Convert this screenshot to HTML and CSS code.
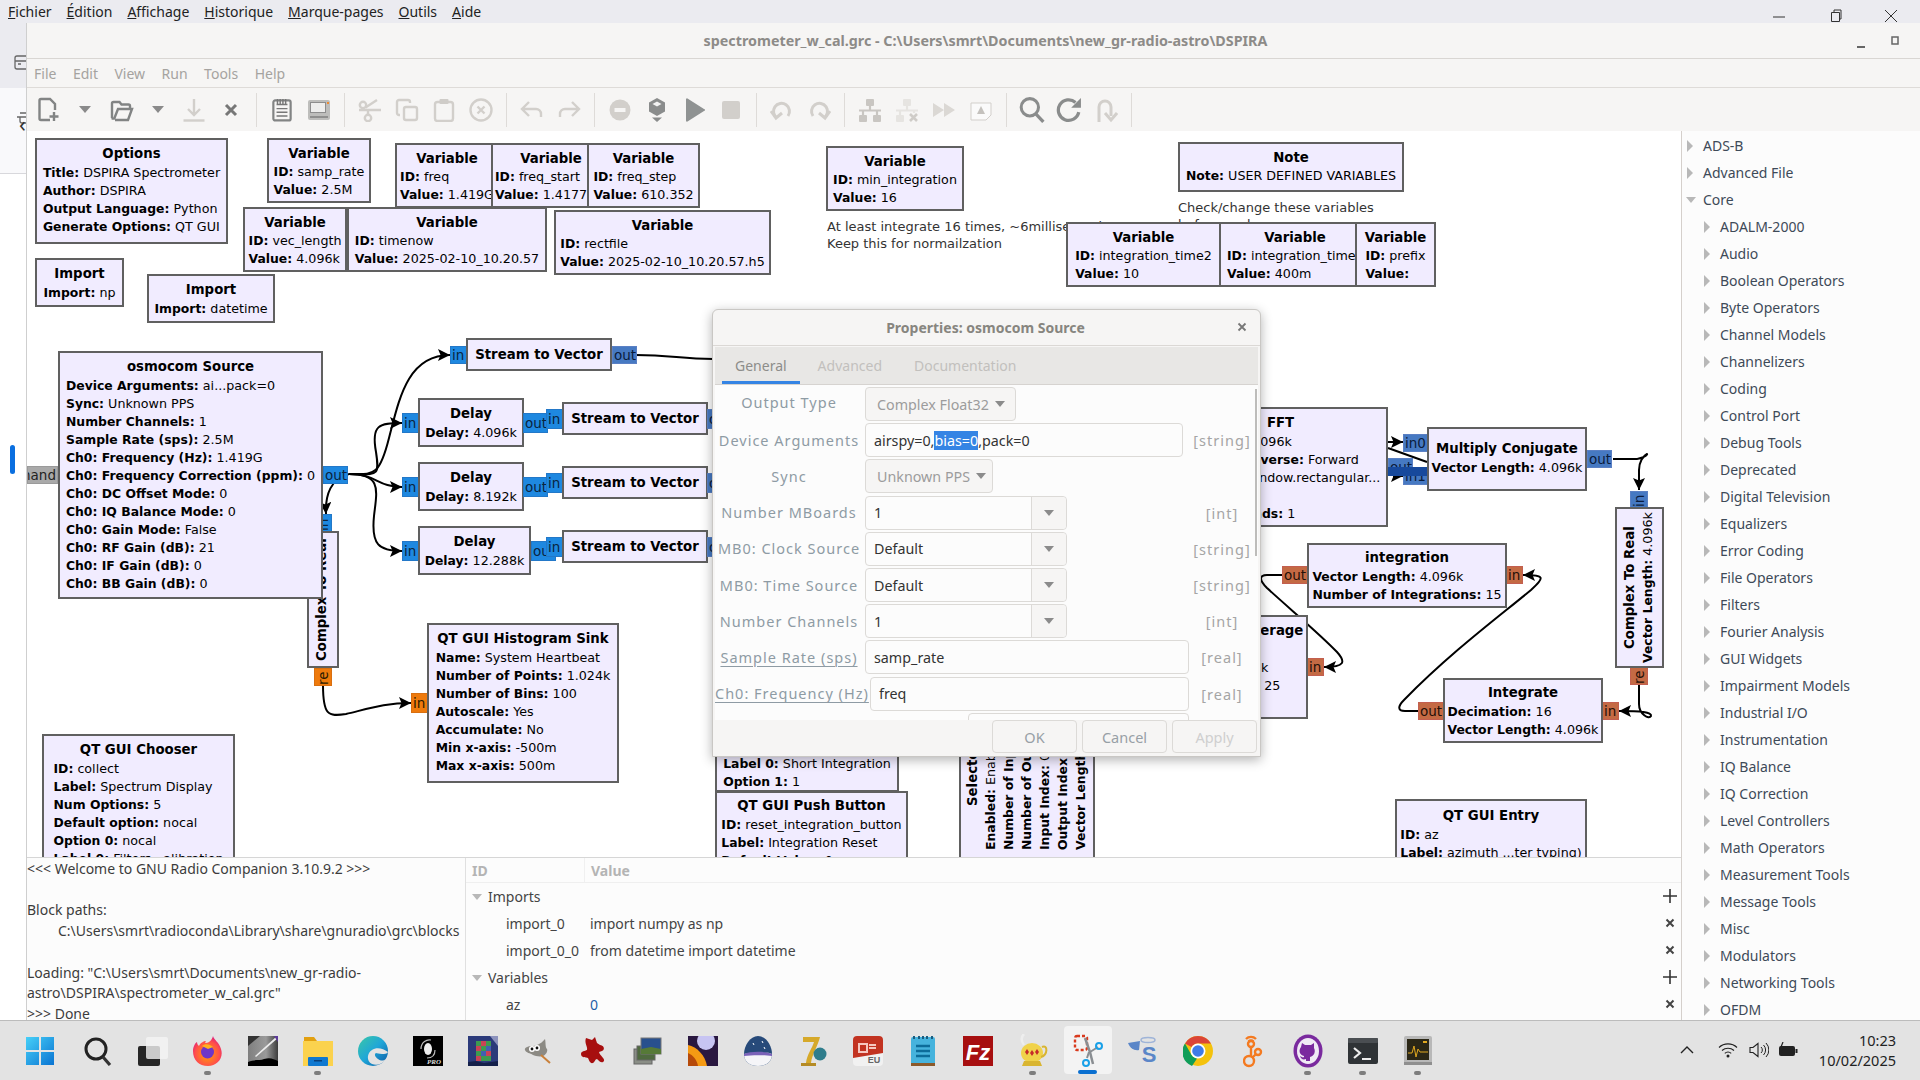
FILE: index.html
```html
<!DOCTYPE html>
<html lang="fr">
<head>
<meta charset="utf-8">
<title>GNU Radio Companion</title>
<link rel="stylesheet" href="styles.css">
</head>
<body>
<div class="screen">
  <header class="browserbar">
    <nav class="bmenu">
      <span><u>F</u>ichier</span><span><u>É</u>dition</span><span><u>A</u>ffichage</span><span><u>H</u>istorique</span><span><u>M</u>arque-pages</span><span><u>O</u>utils</span><span><u>A</u>ide</span>
    </nav>
    <div class="bctrls">
      <svg width="14" height="14" viewBox="0 0 14 14"><path d="M1 8h12" stroke="#333" fill="none"/></svg>
      <svg width="14" height="14" viewBox="0 0 14 14"><path d="M3.500 3.500h8v9h-8zM6 3.500V1h7v9h-1.500" stroke="#333" fill="none"/></svg>
      <svg width="14" height="14" viewBox="0 0 14 14"><path d="M1 1l12 12M13 1L1 13" stroke="#333" fill="none"/></svg>
    </div>
  </header>
  <div class="mainrow">
    <aside class="gutter">
      <div class="g1"><svg width="12" height="20" viewBox="0 0 12 20"><path d="M12 4H3a2 2 0 0 0-2 2v9a2 2 0 0 0 2 2h9M1 9h11M4 12h3" stroke="#666" stroke-width="1.300" fill="none"/></svg></div>
      <div class="g2"><span class="lt">‹</span><svg width="12" height="20" viewBox="0 0 12 20"><path d="M12 5H6M3 9h9M6 9v4a2 2 0 0 0 2 2h4" stroke="#666" stroke-width="1.300" fill="none"/></svg></div>
      <div class="g3"><i class="pill"></i></div>
    </aside>
    <section class="window">
      <div class="titlebar">
        <span class="wtitle">spectrometer_w_cal.grc - C:\Users\smrt\Documents\new_gr-radio-astro\DSPIRA</span>
        <svg class="wmin" width="10" height="10" viewBox="0 0 10 10"><path d="M1 8h8" stroke="#666" stroke-width="2"/></svg>
        <svg class="wmax" width="10" height="10" viewBox="0 0 10 10"><rect x="2" y="1" width="6" height="7" stroke="#666" stroke-width="1.500" fill="none"/></svg>
      </div>
      <nav class="menubar"><span>File</span><span>Edit</span><span>View</span><span>Run</span><span>Tools</span><span>Help</span></nav>
      <div class="toolbar">
        <span class="tbtn"><svg viewBox="0 0 24 26" width="24" height="26"><path d="M13 23H4a1.500 1.500 0 0 1-1.500-1.500v-18A1.500 1.500 0 0 1 4 2h9l5 5v6" class="on"/><path d="M17 15v9M12.500 19.500h9" class="on"/></svg></span>
        <span class="tbtn narrow"><svg viewBox="0 0 12 8" width="12" height="8"><path d="M0 0h12L6 7z" fill="#8a8a8a"/></svg></span>
        <span class="tbtn"><svg viewBox="0 0 24 24" width="24" height="24"><path d="M2 20V5.500A1.500 1.500 0 0 1 3.500 4h6l2 2.500h7A1.500 1.500 0 0 1 20 8v2M5 22h13l4-11H8L4.500 20A1.500 1.500 0 0 1 2 20" class="on"/></svg></span>
        <span class="tbtn narrow"><svg viewBox="0 0 12 8" width="12" height="8"><path d="M0 0h12L6 7z" fill="#8a8a8a"/></svg></span>
        <span class="tbtn"><svg viewBox="0 0 24 24" width="24" height="24"><path d="M12 1v15M6 11l6 6 6-6" class="off"/><path d="M1.500 22.500h21" class="off"/></svg></span>
        <span class="tbtn"><svg viewBox="0 0 14 14" width="14" height="14"><path d="M2 2l10 10M12 2L2 12" stroke="#777" stroke-width="3" fill="none"/></svg></span>
        <i class="tsep"></i>
        <span class="tbtn"><svg viewBox="0 0 22 26" width="20" height="26"><rect x="1.500" y="2.500" width="19" height="22" rx="2" class="on"/><path d="M5 7h12M5 11.500h12M5 15.500h12M5 19.500h12M6 1v5M9 1v5M12 1v5M15 1v5" stroke="#777" stroke-width="1.600" fill="none"/></svg></span>
        <span class="tbtn"><svg viewBox="0 0 24 24" width="24" height="24"><rect x="1" y="2" width="22" height="20" rx="2" fill="#bdbdbb"/><rect x="3.500" y="4.500" width="15" height="10" fill="#ededec" stroke="#8d8d8d"/><rect x="20" y="4" width="2" height="2" fill="#ee8a30"/><rect x="3" y="18" width="18" height="2" fill="#8f8f8e"/></svg></span>
        <i class="tsep"></i>
        <span class="tbtn"><svg viewBox="0 0 24 24" width="24" height="24"><circle cx="5" cy="7" r="3.200" class="off"/><circle cx="10" cy="20" r="3.200" class="off"/><path d="M1 12h22M10 17L10 12M7.500 9.500L19 2" class="off"/></svg></span>
        <span class="tbtn"><svg viewBox="0 0 24 24" width="24" height="24"><path d="M5 17H4a2 2 0 0 1-2-2V4a2 2 0 0 1 2-2h9a2 2 0 0 1 2 2v1" class="off"/><rect x="9" y="9" width="13" height="13" rx="2" class="off"/></svg></span>
        <span class="tbtn"><svg viewBox="0 0 24 24" width="24" height="24"><rect x="3" y="4" width="18" height="19" rx="2.500" class="off"/><rect x="7.500" y="1" width="9" height="5" rx="1" fill="#cfccc8"/></svg></span>
        <span class="tbtn"><svg viewBox="0 0 24 24" width="24" height="24"><circle cx="12" cy="12" r="10.500" class="off"/><path d="M8.500 8.500l7 7M15.500 8.500l-7 7" class="off"/></svg></span>
        <i class="tsep"></i>
        <span class="tbtn"><svg viewBox="0 0 24 24" width="24" height="24"><path d="M9 4L2 11l7 7M2 11h14a5 5 0 0 1 5 5v3" class="off"/></svg></span>
        <span class="tbtn"><svg viewBox="0 0 24 24" width="24" height="24"><path d="M15 4l7 7-7 7M22 11H8a5 5 0 0 0-5 5v3" class="off"/></svg></span>
        <i class="tsep"></i>
        <span class="tbtn"><svg viewBox="0 0 24 24" width="24" height="24"><circle cx="12" cy="12" r="10.500" fill="#d2cfcb"/><rect x="6.500" y="10" width="11" height="4" fill="#f6f5f4"/></svg></span>
        <span class="tbtn"><svg viewBox="0 0 24 24" width="24" height="24"><path d="M12 0l8 4.500v9L12 18l-8-4.500v-9z" fill="#8a8c8c"/><path d="M12 3.500l4.500 2.500L12 8.500 7.500 6z" fill="#f2f2f2"/><path d="M7 19.500h10l-5 4.500z" fill="#8a8c8c"/></svg></span>
        <span class="tbtn"><svg viewBox="0 0 24 24" width="24" height="24"><path d="M4 1.500a1 1 0 0 1 1.500-1L22 11a1 1 0 0 1 0 2L5.500 23.500a1 1 0 0 1-1.500-1z" fill="#8f9292"/></svg></span>
        <span class="tbtn"><svg viewBox="0 0 24 24" width="24" height="24"><rect x="3" y="3" width="18" height="18" rx="2" fill="#d2cfcb"/></svg></span>
        <i class="tsep"></i>
        <span class="tbtn"><svg viewBox="0 0 24 24" width="24" height="24"><path d="M7 20a8 8 0 1 1 11-2" class="off w3"/><path d="M1 13l5 7 6-5" class="off w3"/></svg></span>
        <span class="tbtn"><svg viewBox="0 0 24 24" width="24" height="24"><path d="M17 20a8 8 0 1 0-11-2" class="off w3"/><path d="M23 13l-5 7-6-5" class="off w3"/></svg></span>
        <i class="tsep"></i>
        <span class="tbtn"><svg viewBox="0 0 24 24" width="24" height="24"><rect x="8" y="1" width="8" height="7" rx="1" fill="#c9c6c2"/><rect x="1" y="17" width="8" height="7" rx="1" fill="#c9c6c2"/><rect x="15" y="17" width="8" height="7" rx="1" fill="#c9c6c2"/><path d="M12 8v5M1 12.500h22M5 12v5M19 12v5" stroke="#c9c6c2" stroke-width="2.200" fill="none"/></svg></span>
        <span class="tbtn"><svg viewBox="0 0 24 24" width="24" height="24"><rect x="8" y="1" width="8" height="7" rx="1" fill="#e6e4e1"/><rect x="1" y="17" width="8" height="7" rx="1" fill="#e6e4e1"/><path d="M12 8v5M1 12.500h22M5 12v5M19 12v3" stroke="#e6e4e1" stroke-width="2.200" fill="none"/><path d="M15 16l7 7M22 16l-7 7" stroke="#cfccc8" stroke-width="2.600"/></svg></span>
        <span class="tbtn"><svg viewBox="0 0 24 24" width="24" height="24"><path d="M1 5l11 7-11 7zM12 5l11 7-11 7z" fill="#dbd8d4"/></svg></span>
        <span class="tbtn"><svg viewBox="0 0 24 24" width="24" height="24"><path d="M2 5h20v12l-5 5H2z" fill="#fafafa" stroke="#d2cfcb"/><path d="M12 8l4 8H8z" fill="#c4c1bd"/></svg></span>
        <i class="tsep"></i>
        <span class="tbtn"><svg viewBox="0 0 24 24" width="26" height="26"><circle cx="10" cy="9.500" r="8" stroke="#8a8c8c" stroke-width="2.800" fill="none"/><path d="M15.500 15.500l7 7.500" stroke="#8a8c8c" stroke-width="3" fill="none"/></svg></span>
        <span class="tbtn"><svg viewBox="0 0 24 24" width="26" height="26"><path d="M21 14a9.500 9.500 0 1 1-3-9" stroke="#8a8c8c" stroke-width="3" fill="none"/><path d="M23 1v9h-9z" fill="#8a8c8c"/></svg></span>
        <span class="tbtn"><svg viewBox="0 0 24 24" width="24" height="26"><path d="M5 24V9a6 6 0 0 1 12 0v9" class="off w3"/><path d="M11 15l6 7 6-7" class="off w3"/></svg></span>
        <i class="tsep"></i>
      </div>
      <div class="workrow">
        <div class="centercol">
          <main class="canvas">
            <svg class="wires" viewBox="26 131 1655 726" width="1655" height="726">
              <defs><marker id="ah" markerUnits="userSpaceOnUse" markerWidth="13" markerHeight="12" refX="12" refY="6" orient="auto"><path d="M0 0L12 6 0 12 2.500 6z" fill="#000"/></marker></defs>
              <path class="w" marker-end="url(#ah)" d="M348 474C372 474 378 478 388 438C398 400 406 355 449 355"/>
              <path class="w" marker-end="url(#ah)" d="M348 474C376 474 379 478 375 452C370 425 378 423 401 423"/>
              <path class="w" marker-end="url(#ah)" d="M348 474C376 474 376 487 401 487"/>
              <path class="w" marker-end="url(#ah)" d="M348 474C381 474 376 490 373 516C370 545 378 551 401 551"/>
              <path class="w" marker-end="url(#ah)" d="M348 474C330 478 324 495 325 514"/>
              <path class="w" d="M635 355C670 355 680 359 712 359"/>
              <path class="w" marker-end="url(#ah)" d="M322 685C322 715 327 717 345 714C370 708 385 703 410 703"/>
              <path class="w" marker-end="url(#ah)" d="M1387 442L1402 442"/>
              <path class="w" d="M1387 448L1426 462"/>
              <path class="w" marker-end="url(#ah)" d="M1392 476L1402 476"/>
              <path class="w" marker-end="url(#ah)" d="M1612 459L1636 459C1642 459 1647 454 1646 454C1642 456 1638 462 1638 470L1638 490"/>
              <path class="w" marker-end="url(#ah)" d="M1638 684L1638 704C1638 714 1648 720 1650 716C1651 712 1640 711 1618 711"/>
              <path class="w" marker-end="url(#ah)" d="M1417 711L1404 711C1396 711 1397 706 1403 700C1450 652 1500 615 1530 590C1544 577 1544 575 1522 575"/>
              <path class="w" marker-end="url(#ah)" d="M1281 575L1266 575C1258 575 1258 580 1266 588C1290 610 1320 635 1336 652C1345 662 1344 667 1323 667"/>
            </svg>

            <div class="blk b-options"><b class="t">Options</b><div class="ps"><p><b>Title:</b> DSPIRA Spectrometer</p><p><b>Author:</b> DSPIRA</p><p><b>Output Language:</b> Python</p><p><b>Generate Options:</b> QT GUI</p></div></div>
            <div class="blk tight b-samp"><b class="t">Variable</b><div class="ps"><p><b>ID:</b> samp_rate</p><p><b>Value:</b> 2.5M</p></div></div>
            <div class="blk tight b-freq"><b class="t">Variable</b><div class="ps"><p><b>ID:</b> freq</p><p><b>Value:</b> 1.419G</p></div></div>
            <div class="blk tight b-fstart"><b class="t">Variable</b><div class="ps"><p><b>ID:</b> freq_start</p><p><b>Value:</b> 1.4177G</p></div></div>
            <div class="blk tight b-fstep"><b class="t">Variable</b><div class="ps"><p><b>ID:</b> freq_step</p><p><b>Value:</b> 610.352</p></div></div>
            <div class="blk tight b-vec"><b class="t">Variable</b><div class="ps"><p><b>ID:</b> vec_length</p><p><b>Value:</b> 4.096k</p></div></div>
            <div class="blk tight b-time"><b class="t">Variable</b><div class="ps"><p><b>ID:</b> timenow</p><p><b>Value:</b> 2025-02-10_10.20.57</p></div></div>
            <div class="blk tight b-rect"><b class="t">Variable</b><div class="ps"><p><b>ID:</b> rectfile</p><p><b>Value:</b> 2025-02-10_10.20.57.h5</p></div></div>
            <div class="blk b-impnp"><b class="t">Import</b><div class="ps"><p><b>Import:</b> np</p></div></div>
            <div class="blk b-impdt"><b class="t">Import</b><div class="ps"><p><b>Import:</b> datetime</p></div></div>
            <div class="blk tight b-minint"><b class="t">Variable</b><div class="ps"><p><b>ID:</b> min_integration</p><p><b>Value:</b> 16</p></div></div>
            <div class="cmt c-min">At least integrate 16 times, ~6milliseconds<br>Keep this for normailzation</div>
            <div class="blk tight b-note"><b class="t">Note</b><div class="ps"><p><b>Note:</b> USER DEFINED VARIABLES</p></div></div>
            <div class="cmt c-note">Check/change these variables<br>before each run</div>
            <div class="blk tight b-it2"><b class="t">Variable</b><div class="ps"><p><b>ID:</b> integration_time2</p><p><b>Value:</b> 10</p></div></div>
            <div class="blk tight b-it"><b class="t">Variable</b><div class="ps"><p><b>ID:</b> integration_time</p><p><b>Value:</b> 400m</p></div></div>
            <div class="blk tight b-prefix"><b class="t">Variable</b><div class="ps"><p><b>ID:</b> prefix</p><p><b>Value:</b></p></div></div>

            <span class="port gray p-hand">hand</span>
            <span class="port bright vert p-cin">in</span>
            <span class="port org vert p-cre">re</span>
            <div class="blk rot b-c2r"><b class="t">Complex To Real</b></div>
            <div class="blk b-osmo"><b class="t">osmocom Source</b><div class="ps"><p><b>Device Arguments:</b> ai...pack=0</p><p><b>Sync:</b> Unknown PPS</p><p><b>Number Channels:</b> 1</p><p><b>Sample Rate (sps):</b> 2.5M</p><p><b>Ch0: Frequency (Hz):</b> 1.419G</p><p><b>Ch0: Frequency Correction (ppm):</b> 0</p><p><b>Ch0: DC Offset Mode:</b> 0</p><p><b>Ch0: IQ Balance Mode:</b> 0</p><p><b>Ch0: Gain Mode:</b> False</p><p><b>Ch0: RF Gain (dB):</b> 21</p><p><b>Ch0: IF Gain (dB):</b> 0</p><p><b>Ch0: BB Gain (dB):</b> 0</p></div></div>
            <span class="port bright p-oout">out</span>

            <span class="port bright p-s1i">in</span>
            <div class="blk b-s1"><b class="t">Stream to Vector</b></div>
            <span class="port dim p-s1o">out</span>
            <span class="port bright tall p-d1i">in</span>
            <div class="blk b-d1"><b class="t">Delay</b><div class="ps"><p><b>Delay:</b> 4.096k</p></div></div>
            <span class="port bright tall p-d1o">out</span>
            <span class="port bright tall p-s2i">in</span>
            <div class="blk b-s2"><b class="t">Stream to Vector</b></div>
            <span class="port dim tall p-s2o">out</span>
            <span class="port bright tall p-d2i">in</span>
            <div class="blk b-d2"><b class="t">Delay</b><div class="ps"><p><b>Delay:</b> 8.192k</p></div></div>
            <span class="port bright tall p-d2o">out</span>
            <span class="port bright tall p-s3i">in</span>
            <div class="blk b-s3"><b class="t">Stream to Vector</b></div>
            <span class="port dim tall p-s3o">out</span>
            <span class="port bright tall p-d3i">in</span>
            <div class="blk b-d3"><b class="t">Delay</b><div class="ps"><p><b>Delay:</b> 12.288k</p></div></div>
            <span class="port bright tall p-d3o">out</span>
            <span class="port bright tall p-s4i">in</span>
            <div class="blk b-s4"><b class="t">Stream to Vector</b></div>
            <span class="port dim tall p-s4o">out</span>

            <span class="port org tall p-hi">in</span>
            <div class="blk b-hist"><b class="t">QT GUI Histogram Sink</b><div class="ps"><p><b>Name:</b> System Heartbeat</p><p><b>Number of Points:</b> 1.024k</p><p><b>Number of Bins:</b> 100</p><p><b>Autoscale:</b> Yes</p><p><b>Accumulate:</b> No</p><p><b>Min x-axis:</b> -500m</p><p><b>Max x-axis:</b> 500m</p></div></div>
            <div class="blk b-choose"><b class="t">QT GUI Chooser</b><div class="ps"><p><b>ID:</b> collect</p><p><b>Label:</b> Spectrum Display</p><p><b>Num Options:</b> 5</p><p><b>Default option:</b> nocal</p><p><b>Option 0:</b> nocal</p><p><b>Label 0:</b> Filters...alibration</p></div></div>
            <div class="blk b-choose2"><div class="ps"><p><b>Label 0:</b> Short Integration</p><p><b>Option 1:</b> 1</p></div></div>
            <div class="blk b-push"><b class="t">QT GUI Push Button</b><div class="ps"><p><b>ID:</b> reset_integration_button</p><p><b>Label:</b> Integration Reset</p><p><b>Default Value:</b> 0</p></div></div>
            <div class="blk rot b-sel"><b class="t">Selector</b><div class="ps"><p><b>Enabled:</b> Enabled</p><p><b>Number of Inputs:</b> 1</p><p><b>Number of Outputs:</b> 2</p><p><b>Input Index:</b> 0</p><p><b>Output Index:</b> 0</p><p><b>Vector Length:</b> 4.096k</p></div></div>

            <div class="blk b-fft"><b class="t">FFT</b><div class="ps"><p><b>FFT Size:</b> 4.096k</p><p><b>Forward/Reverse:</b> Forward</p><p><b>Window:</b> window.rectangular...</p><p>&nbsp;</p><p><b>Num. Threads:</b> 1</p></div></div>
            <span class="port dim p-m0">in0</span>
            <span class="port dim p-m1">in1</span>
            <span class="port dim p-fo">out</span>
            <i class="overlap"></i>
            <div class="blk b-mul"><b class="t">Multiply Conjugate</b><div class="ps"><p><b>Vector Length:</b> 4.096k</p></div></div>
            <span class="port dim p-mo">out</span>
            <span class="port dim vert p-c2i">in</span>
            <span class="port brn vert p-c2e">re</span>
            <div class="blk rot b-c2"><b class="t">Complex To Real</b><div class="ps"><p><b>Vector Length:</b> 4.096k</p></div></div>
            <span class="port brn p-io">out</span>
            <span class="port brn p-ii">in</span>
            <div class="blk b-integ"><b class="t">integration</b><div class="ps"><p><b>Vector Length:</b> 4.096k</p><p><b>Number of Integrations:</b> 15</p></div></div>
            <span class="port brn p-gi">in</span>
            <span class="port brn p-go">out</span>
            <div class="blk b-grate"><b class="t">Integrate</b><div class="ps"><p><b>Decimation:</b> 16</p><p><b>Vector Length:</b> 4.096k</p></div></div>
            <span class="port brn p-ai">in</span>
            <div class="blk b-avg"><b class="t">Moving Average</b><div class="ps"><p><b>Length:</b> 1k</p><p><b>Size:</b> 4.096k</p><p><b>Iterations:</b> 25</p></div></div>
            <div class="blk b-entry"><b class="t">QT GUI Entry</b><div class="ps"><p><b>ID:</b> az</p><p><b>Label:</b> azimuth ...ter typing)</p></div></div>
          </main>
          <div class="bottom">
            <pre class="console">&lt;&lt;&lt; Welcome to GNU Radio Companion 3.10.9.2 &gt;&gt;&gt;

Block paths:
	C:\Users\smrt\radioconda\Library\share\gnuradio\grc\blocks

Loading: "C:\Users\smrt\Documents\new_gr-radio-
astro\DSPIRA\spectrometer_w_cal.grc"
&gt;&gt;&gt; Done</pre>
            <div class="vars">
              <div class="vhead"><span class="vh1">ID</span><span class="vh2">Value</span></div>
              <div class="vrow"><i class="tri-d"></i><span>Imports</span></div>
              <div class="vrow sub"><span class="vk">import_0</span><span>import numpy as np</span></div>
              <div class="vrow sub"><span class="vk">import_0_0</span><span>from datetime import datetime</span></div>
              <div class="vrow"><i class="tri-d"></i><span>Variables</span></div>
              <div class="vrow sub"><span class="vk">az</span><span class="vblue">0</span></div>
              <div class="vbtns">
                <svg width="16" height="16" viewBox="0 0 16 16"><path d="M8 1v14M1 8h14" stroke="#333" stroke-width="1.600"/></svg>
                <svg width="16" height="16" viewBox="0 0 16 16"><path d="M4.500 4.500l7 7M11.500 4.500l-7 7" stroke="#444" stroke-width="2"/></svg>
                <svg width="16" height="16" viewBox="0 0 16 16"><path d="M4.500 4.500l7 7M11.500 4.500l-7 7" stroke="#444" stroke-width="2"/></svg>
                <svg width="16" height="16" viewBox="0 0 16 16"><path d="M8 1v14M1 8h14" stroke="#333" stroke-width="1.600"/></svg>
                <svg width="16" height="16" viewBox="0 0 16 16"><path d="M4.500 4.500l7 7M11.500 4.500l-7 7" stroke="#444" stroke-width="2"/></svg>
              </div>
            </div>
          </div>
        </div>
        <aside class="sidebar">
          <div class="ti"><i class="tri-r"></i>ADS-B</div>
          <div class="ti"><i class="tri-r"></i>Advanced File</div>
          <div class="ti"><i class="tri-d"></i>Core</div>
          <div class="ti c"><i class="tri-r"></i>ADALM-2000</div>
          <div class="ti c"><i class="tri-r"></i>Audio</div>
          <div class="ti c"><i class="tri-r"></i>Boolean Operators</div>
          <div class="ti c"><i class="tri-r"></i>Byte Operators</div>
          <div class="ti c"><i class="tri-r"></i>Channel Models</div>
          <div class="ti c"><i class="tri-r"></i>Channelizers</div>
          <div class="ti c"><i class="tri-r"></i>Coding</div>
          <div class="ti c"><i class="tri-r"></i>Control Port</div>
          <div class="ti c"><i class="tri-r"></i>Debug Tools</div>
          <div class="ti c"><i class="tri-r"></i>Deprecated</div>
          <div class="ti c"><i class="tri-r"></i>Digital Television</div>
          <div class="ti c"><i class="tri-r"></i>Equalizers</div>
          <div class="ti c"><i class="tri-r"></i>Error Coding</div>
          <div class="ti c"><i class="tri-r"></i>File Operators</div>
          <div class="ti c"><i class="tri-r"></i>Filters</div>
          <div class="ti c"><i class="tri-r"></i>Fourier Analysis</div>
          <div class="ti c"><i class="tri-r"></i>GUI Widgets</div>
          <div class="ti c"><i class="tri-r"></i>Impairment Models</div>
          <div class="ti c"><i class="tri-r"></i>Industrial I/O</div>
          <div class="ti c"><i class="tri-r"></i>Instrumentation</div>
          <div class="ti c"><i class="tri-r"></i>IQ Balance</div>
          <div class="ti c"><i class="tri-r"></i>IQ Correction</div>
          <div class="ti c"><i class="tri-r"></i>Level Controllers</div>
          <div class="ti c"><i class="tri-r"></i>Math Operators</div>
          <div class="ti c"><i class="tri-r"></i>Measurement Tools</div>
          <div class="ti c"><i class="tri-r"></i>Message Tools</div>
          <div class="ti c"><i class="tri-r"></i>Misc</div>
          <div class="ti c"><i class="tri-r"></i>Modulators</div>
          <div class="ti c"><i class="tri-r"></i>Networking Tools</div>
          <div class="ti c"><i class="tri-r"></i>OFDM</div>
        </aside>
      </div>
    </section>
  </div>

  <footer class="taskbar">
    <div class="tbicons">
      <span class="tb first"><svg width="30" height="30" viewBox="0 0 30 30"><defs><linearGradient id="win" x1="0" y1="0" x2="1" y2="1"><stop offset="0" stop-color="#47d0f8"/><stop offset="1" stop-color="#0a74d2"/></linearGradient></defs><path d="M1 1h13v13H1zM16 1h13v13H16zM1 16h13v13H1zM16 16h13v13H16z" fill="url(#win)"/></svg></span>
      <span class="tb"><svg width="30" height="30" viewBox="0 0 30 30"><circle cx="13" cy="13" r="10" fill="none" stroke="#222" stroke-width="3"/><path d="M20 21l7 8" stroke="#333" stroke-width="3.200"/></svg></span>
      <span class="tb"><svg width="30" height="30" viewBox="0 0 30 30"><rect x="0" y="10" width="22" height="20" rx="2" fill="#262626"/><rect x="8" y="1" width="22" height="22" rx="2" fill="#f4f4f4" opacity=".8"/></svg></span>
      <span class="tb dot"><svg width="30" height="30" viewBox="0 0 30 30"><defs><radialGradient id="ff" cx=".5" cy=".6" r=".6"><stop offset="0" stop-color="#ffa400"/><stop offset=".7" stop-color="#ff4f4a"/><stop offset="1" stop-color="#e01f7c"/></radialGradient></defs><path d="M20 0c1 4 6 6 8 13 3 9-4 17-13 17S0 24 0 15c0-4 2-8 4-9 0 2 1 3 2 4 1-3 5-5 7-5-1 1-1 2 0 2 3 0 6-3 7-7z" fill="url(#ff)"/><circle cx="14.500" cy="16" r="6.500" fill="#6d35c9"/><path d="M9 10c3-3 8-2 11 1l-5 2z" fill="#ffb020"/></svg></span>
      <span class="tb"><svg width="30" height="30" viewBox="0 0 30 30"><defs><linearGradient id="cm" x1="0" y1="0" x2="1" y2="0"><stop offset="0" stop-color="#7f7f7f"/><stop offset=".6" stop-color="#9a9a9a"/><stop offset="1" stop-color="#3c3c3c"/></linearGradient></defs><rect width="30" height="30" fill="url(#cm)"/><path d="M0 0h12L0 10z" fill="#333"/><path d="M7 20L28 1l2 1-22 19z" fill="#ececec"/><path d="M0 30v-4c6-3 12-1 16-3 6-2 10 0 14 2v5z" fill="#000"/><path d="M26 0h4v6z" fill="#5d3a9b"/></svg></span>
      <span class="tb dot"><svg width="30" height="30" viewBox="0 0 30 30"><path d="M1 1h10l3 4h15v5H1z" fill="#e2a010"/><path d="M0 5h30v25H0z" fill="#fbd24e"/><rect x="5" y="21" width="20" height="9" rx="1" fill="#0f78d0"/><rect x="11" y="24" width="8" height="1.500" fill="#083f7a"/></svg></span>
      <span class="tb"><svg width="30" height="30" viewBox="0 0 30 30"><defs><linearGradient id="edg" x1="0" y1="0" x2="1" y2="1"><stop offset="0" stop-color="#3bc8a6"/><stop offset=".5" stop-color="#1fa6d8"/><stop offset="1" stop-color="#0c59a4"/></linearGradient></defs><circle cx="15" cy="15" r="15" fill="url(#edg)"/><path d="M14 14c4-3 11-2 16 2-1 2-4 2-6 2-3 0-5-1-6-1-2 1-1 4 2 6 3 2 5 2 8 0-3 5-9 7-14 5-6-3-5-11 0-14z" fill="#e3e3e3"/></svg></span>
      <span class="tb"><svg width="30" height="30" viewBox="0 0 30 30"><rect width="30" height="30" fill="#000"/><ellipse cx="15" cy="13" rx="4" ry="6" fill="#eee"/><path d="M8 13c0-7 6-10 10-9M22 14c0 5-3 8-8 8" stroke="#bbb" stroke-width="1.200" fill="none"/><text x="14" y="28" class="svgpro">PRO</text></svg></span>
      <span class="tb"><svg width="30" height="30" viewBox="0 0 30 30"><rect width="30" height="30" fill="#2b3a7a"/><path d="M22 0h8v10z" fill="#8d93bd"/><rect x="8" y="5" width="5" height="5" fill="#3d9a4f"/><rect x="13" y="5" width="5" height="5" fill="#c84356"/><rect x="18" y="5" width="5" height="5" fill="#3d9a4f"/><rect x="8" y="10" width="5" height="5" fill="#c84356"/><rect x="13" y="10" width="5" height="5" fill="#3d9a4f"/><rect x="18" y="10" width="5" height="5" fill="#4160b0"/><rect x="8" y="15" width="5" height="5" fill="#3d9a4f"/><rect x="13" y="15" width="5" height="5" fill="#4160b0"/><rect x="18" y="15" width="5" height="5" fill="#c84356"/><rect x="8" y="20" width="5" height="5" fill="#c84356"/><rect x="13" y="20" width="5" height="5" fill="#3d9a4f"/><rect x="18" y="20" width="5" height="5" fill="#3d9a4f"/><path d="M0 30v-4l8-1 8 2 14-2v5z" fill="#14204a"/></svg></span>
      <span class="tb"><svg width="30" height="30" viewBox="0 0 30 30"><path d="M22 3c1 4 0 8 2 10 1 2-1 6-4 7-3 1-8 0-10-1-3-2-7-2-8-5-1-2 3-4 7-4 3 0 8-1 13-7z" fill="#8c8a84"/><circle cx="9" cy="13" r="3" fill="#fff"/><circle cx="14" cy="12" r="3" fill="#fff"/><circle cx="9" cy="13" r="1.400" fill="#111"/><circle cx="14" cy="12" r="1.400" fill="#111"/><path d="M18 19l9 8" stroke="#c9803a" stroke-width="2"/></svg></span>
      <span class="tb"><svg width="30" height="30" viewBox="0 0 30 30"><path d="M8 2l6 2 3-3 2 6 3 2c3 0 6 4 2 6l-3 1c1 4 6 6 5 9-2 3-5 0-7-2-2 0-2 3-4 4-3 1-4-3-5-5-2-1-7 0-7-4 0-3 4-3 6-4 1-3-3-7-1-12z" fill="#a70f0f"/></svg></span>
      <span class="tb"><svg width="30" height="30" viewBox="0 0 30 30"><rect x="1" y="13" width="18" height="15" fill="#8a8e86" stroke="#666"/><rect x="4" y="10" width="18" height="14" fill="#4f6a3f" stroke="#666"/><rect x="8" y="2" width="20" height="16" fill="#28508e" stroke="#777"/><path d="M8 13l10-2 10 2v5H8z" fill="#567a37"/></svg></span>
      <span class="tb"><svg width="30" height="30" viewBox="0 0 30 30"><rect width="30" height="30" fill="#2a1840"/><circle cx="18" cy="5" r="9" fill="#c7c4f2"/><path d="M0 9c9 2 17 10 19 21H0z" fill="#f59a14"/><path d="M0 17c5 2 9 7 10 13H0z" fill="#b64a0a"/></svg></span>
      <span class="tb"><svg width="30" height="32" viewBox="0 0 30 32"><path d="M15 1C23 1 29 11 29 19c0 8-6 12-14 12S1 27 1 19C1 11 7 1 15 1z" fill="#274a7a"/><path d="M1 19c3-1 5 0 7-1 3 1 5-1 8 0 4 1 8-2 13 1 0 8-6 12-14 12S1 27 1 19z" fill="#f5f5f8"/><path d="M1 19c6-3 22-3 28 0v2c-8-1-20-1-28 0z" fill="#7a62b8"/><path d="M10 8l1 2M19 6l1 2M21 12l1 2" stroke="#fff"/></svg></span>
      <span class="tb"><svg width="30" height="32" viewBox="0 0 30 32"><path d="M5 2h17c-2 9-8 17-9 26h-5c1-9 6-14 8-21H5z" fill="#d6a92a"/><path d="M3 28h15v3H3z" fill="#b58b25"/><circle cx="22" cy="19" r="6.500" fill="#2f7d8c"/></svg></span>
      <span class="tb"><svg width="30" height="30" viewBox="0 0 30 30"><rect width="30" height="30" rx="4" fill="#f1f1f1"/><path d="M0 4a4 4 0 0 1 4-4h22a4 4 0 0 1 4 4v13L0 22z" fill="#c23321"/><path d="M6 8h8v8H6z" fill="none" stroke="#f6c7bf" stroke-width="2"/><path d="M16 9h7M16 12h7" stroke="#f6c7bf" stroke-width="2"/><text x="21" y="27" class="svgeu">EU</text></svg></span>
      <span class="tb"><svg width="26" height="32" viewBox="0 0 26 32"><rect x="1" y="2" width="24" height="29" rx="2" fill="#46b3dd"/><path d="M1 28h24v3H1z" fill="#8c5a2b"/><path d="M6 11h14M6 16h14M6 21h14" stroke="#0d6c9a" stroke-width="2.500"/><path d="M4 1v3M9 1v3M13 1v3M17 1v3M22 1v3" stroke="#1a5d80" stroke-width="2"/></svg></span>
      <span class="tb"><svg width="30" height="30" viewBox="0 0 30 30"><rect width="30" height="30" fill="#a70f10"/><text x="15" y="24" class="svgfz">Fz</text></svg></span>
      <span class="tb dot"><svg width="30" height="34" viewBox="0 0 30 34"><path d="M6 0C3 3 3 7 6 11" stroke="#eee" stroke-width="2.500" fill="none"/><ellipse cx="14" cy="19" rx="11" ry="10" fill="#f0d24a"/><path d="M6 27h16l2 5H4z" fill="#d9b531"/><path d="M24 13c6-3 6 8-1 10" stroke="#d9b531" stroke-width="2" fill="none"/><path d="M7 18l2-3 2 3-2 3zM17 18l2-3 2 3-2 3zM12 19l2-3 2 3-2 3z" fill="#c62a2a"/></svg></span>
      <span class="tb active"><svg width="30" height="34" viewBox="0 0 30 34"><rect x="2" y="2" width="12" height="14" rx="2" fill="none" stroke="#d93a1e" stroke-width="2.400" stroke-dasharray="3 2"/><path d="M12 4l5 14 3 12" stroke="#8a8e92" stroke-width="2.500" fill="none"/><path d="M16 18l-2 6M17 18l8-5" stroke="#8a8e92" stroke-width="2"/><circle cx="13" cy="29" r="3" fill="none" stroke="#18a0e8" stroke-width="2"/><circle cx="26" cy="12" r="3" fill="none" stroke="#18a0e8" stroke-width="2"/></svg></span>
      <span class="tb"><svg width="30" height="32" viewBox="0 0 30 32"><path d="M0 8l12-2-1 9c-5 1-9-2-11-7z" fill="#5a86c8"/><ellipse cx="20" cy="5" rx="7" ry="2.500" fill="none" stroke="#9fb4d8" stroke-width="1.500"/><text x="21" y="27" class="svgs">S</text></svg></span>
      <span class="tb"><svg width="30" height="30" viewBox="0 0 30 30"><circle cx="15" cy="15" r="15" fill="#f4c20d"/><path d="M15 0a15 15 0 0 1 13 7.500H15A7.500 7.500 0 0 0 8.500 11L2 7.500A15 15 0 0 1 15 0z" fill="#db4437"/><path d="M2 7.500L8.500 19A7.500 7.500 0 0 0 14 22.500L9 30A15 15 0 0 1 2 7.500z" fill="#0f9d58"/><circle cx="15" cy="15" r="7.500" fill="#fff"/><circle cx="15" cy="15" r="5.800" fill="#3f7be8"/></svg></span>
      <span class="tb"><svg width="20" height="34" viewBox="0 0 20 34"><g fill="none" stroke="#f47a20" stroke-width="2.400"><circle cx="8" cy="10" r="3"/><circle cx="15" cy="18" r="3"/><circle cx="6" cy="27" r="5"/><path d="M8 13v9M13 20l-4 4M3 5a7 7 0 0 1 10 0M5.500 7.500a3.500 3.500 0 0 1 5 0"/></g></svg></span>
      <span class="tb dot"><svg width="30" height="34" viewBox="0 0 30 34"><ellipse cx="15" cy="17" rx="14.500" ry="16.500" fill="#7a2a9e"/><ellipse cx="15" cy="17" rx="11" ry="13" fill="#f0eaf5"/><path d="M9 9l3 2h6l3-2v5c2 4 0 8-4 9v4h-4v-2c-3 1-5 0-6-3 2 1 3 2 4 1v-1c-4-1-6-5-3-9z" fill="#7a2a9e"/></svg></span>
      <span class="tb dot"><svg width="30" height="26" viewBox="0 0 30 26"><rect width="30" height="26" rx="2" fill="#2f3336"/><rect width="30" height="5" rx="1" fill="#4a4e52"/><path d="M6 10l6 5-6 5" fill="none" stroke="#eee" stroke-width="2.200"/><path d="M14 21h9" stroke="#eee" stroke-width="2"/></svg></span>
      <span class="tb dot"><svg width="28" height="30" viewBox="0 0 28 30"><rect width="28" height="28" rx="2" fill="#b8b8b8"/><rect y="26" width="28" height="3" fill="#8f8f8f"/><rect x="3" y="3" width="22" height="21" fill="#2b2716"/><path d="M4 17h4l2-7 2 11 2-8 2 3h8" fill="none" stroke="#e0a820" stroke-width="1"/><rect x="19" y="5" width="4" height="2" fill="#e0a820"/></svg></span>
    </div>
    <div class="tray">
      <svg width="14" height="8" viewBox="0 0 14 8"><path d="M1 7l6-6 6 6" fill="none" stroke="#222" stroke-width="1.400"/></svg>
      <svg class="wifi" width="20" height="16" viewBox="0 0 20 16"><path d="M1 5.500a13 13 0 0 1 18 0M4 8.500a9 9 0 0 1 12 0M6.800 11.300a4.500 4.500 0 0 1 6.400 0" fill="none" stroke="#222" stroke-width="1.100"/><circle cx="10" cy="14" r="1.500" fill="#222"/></svg>
      <svg width="20" height="16" viewBox="0 0 20 16"><path d="M1 5.500h3L9 1.500v13l-5-4H1z" fill="none" stroke="#222" stroke-width="1.100"/><path d="M12 5a4 4 0 0 1 0 6M14.500 3a7 7 0 0 1 0 10M17 1a10 10 0 0 1 0 14" fill="none" stroke="#222"/></svg>
      <svg class="batt" width="20" height="16" viewBox="0 0 20 16"><rect x="1" y="4" width="16" height="10" rx="2" fill="#222"/><rect x="17.500" y="7" width="2" height="4" fill="#222"/><path d="M5 0L3 5h3L4 10" fill="none" stroke="#222" stroke-width="1.200"/></svg>
      <div class="clock"><span>10:23</span><span>10/02/2025</span></div>
    </div>
  </footer>

  <div class="dialog">
    <div class="dtitle"><b>Properties: osmocom Source</b><svg class="dx" width="10" height="10" viewBox="0 0 10 10"><path d="M1.500 1.500l7 7M8.500 1.500l-7 7" stroke="#777" stroke-width="1.800"/></svg></div>
    <div class="dtabs"><span class="tab sel">General</span><span class="tab">Advanced</span><span class="tab">Documentation</span></div>
    <div class="dbody">
      <div class="row"><label>Output Type</label><div class="ctl dd w-ot">Complex Float32<i class="tri-s"></i></div></div>
      <div class="row"><label>Device Arguments</label><div class="ctl en w-en1">airspy=0,<mark>bias=0</mark>,pack=0</div><span class="ty">[string]</span></div>
      <div class="row"><label>Sync</label><div class="ctl dd w-sy">Unknown PPS<i class="tri-s"></i></div></div>
      <div class="row"><label>Number MBoards</label><div class="ctl cb"><span>1</span><em><i class="tri-s"></i></em></div><span class="ty">[int]</span></div>
      <div class="row"><label>MB0: Clock Source</label><div class="ctl cb"><span>Default</span><em><i class="tri-s"></i></em></div><span class="ty">[string]</span></div>
      <div class="row"><label>MB0: Time Source</label><div class="ctl cb"><span>Default</span><em><i class="tri-s"></i></em></div><span class="ty">[string]</span></div>
      <div class="row"><label>Number Channels</label><div class="ctl cb"><span>1</span><em><i class="tri-s"></i></em></div><span class="ty">[int]</span></div>
      <div class="row"><label class="ul">Sample Rate (sps)</label><div class="ctl en w-en2">samp_rate</div><span class="ty">[real]</span></div>
      <div class="row"><label class="ul wide">Ch0: Frequency (Hz)</label><div class="ctl en w-en3">freq</div><span class="ty">[real]</span></div>
      <div class="row"><div class="ctl en w-en4"></div></div>
      <i class="dscroll"></i>
    </div>
    <div class="dact"><span class="dbtn">OK</span><span class="dbtn">Cancel</span><span class="dbtn dis">Apply</span></div>
  </div>
</div>
</body>
</html>
```

FILE: styles.css
```css
*{box-sizing:border-box}
html,body{margin:0;padding:0}
body{width:1920px;height:1080px;overflow:hidden;font-family:"Noto Sans",sans-serif;color:#333}
.screen{position:relative;width:1920px;height:1080px;display:flex;flex-direction:column;overflow:hidden;background:#fff}

/* browser strip */
.browserbar{height:23px;flex:none;background:#ebebf0;display:flex;justify-content:space-between;align-items:flex-start;overflow:hidden}
.bmenu{display:flex;gap:15px;padding:2px 0 0 8px;font-size:14px;line-height:20px;color:#222}
.bctrls{display:flex;gap:42px;padding:9px 22px 0 0}

.mainrow{flex:1;display:flex;min-height:0}
.gutter{width:26px;flex:none;display:flex;flex-direction:column;background:#fff}
.g1{height:65px;background:#ebebf0;padding:29px 0 0 14px;line-height:0}
.g2{height:86px;background:#f9f9fb;border-bottom:1px solid #d8d8dc;padding:20px 0 0 14px;position:relative;line-height:0}
.g2 .lt{position:absolute;left:19px;top:24px;font-size:22px;line-height:22px;color:#333}
.g3{flex:1;position:relative}
.pill{position:absolute;left:10px;top:271px;width:5px;height:29px;border-radius:3px;background:#0a6fe0}

.window{flex:1;min-width:0;display:flex;flex-direction:column;background:#f6f5f4;border-left:1px solid #cfcfcf}
.titlebar{height:36px;flex:none;position:relative;display:flex;justify-content:center;align-items:center;border-bottom:1px solid #d9d6d3;padding-left:24px}
.wtitle{font-weight:700;font-size:14.300px;color:#8d8b88}
.wmin{position:absolute;left:1829px;top:16px}
.wmax{position:absolute;left:1863px;top:13px}
.menubar{height:29px;flex:none;display:flex;gap:16.500px;align-items:center;padding:1px 0 0 7px;font-size:14px;color:#a5a3a0;border-bottom:1px solid #dedbd8}
.toolbar{height:43px;flex:none;display:flex;align-items:center;padding-left:3.500px}
.tbtn{width:37px;height:36px;display:flex;align-items:center;justify-content:center}
.tbtn.narrow{width:35.500px}
.tsep{width:1px;height:34px;background:#dedbd8;margin:0 6.500px}
.on{fill:none;stroke:#828484;stroke-width:2.400}
.off{fill:none;stroke:#d2cfcb;stroke-width:2.400}
.w3{stroke-width:3}

.workrow{flex:1;display:flex;min-height:0}
.centercol{width:1654px;flex:none;display:flex;flex-direction:column;min-width:0}
.canvas{flex:1;position:relative;overflow:hidden;background:#fff;min-height:0}
.wires{position:absolute;left:0;top:0}
.w{fill:none;stroke:#000;stroke-width:2}

/* flowgraph nodes */
.blk{position:absolute;background:#f1ecff;border:2px solid #606060;display:flex;flex-direction:column;align-items:center;padding-top:5px;font-family:"DejaVu Sans",sans-serif;font-size:12.700px;line-height:18px;color:#000;white-space:nowrap}
.blk .t{display:block;margin-bottom:1px;font-size:13.300px}
.tight .t{margin-bottom:0}
.ps{align-self:center}
.ps p{margin:0}
.ps b{font-size:12.400px}
.rot{writing-mode:vertical-rl;transform:rotate(180deg);align-items:center;padding-top:0;padding-left:0;padding-right:4px}
.cmt{position:absolute;font-family:"DejaVu Sans",sans-serif;font-size:13px;line-height:17px;color:#333;white-space:nowrap}
.c-min{left:800px;top:87px}
.c-note{left:1151px;top:68px}
.port{position:absolute;font-family:"DejaVu Sans",sans-serif;font-size:13.500px;line-height:17px;height:18px;padding-left:1px;overflow:hidden;color:#111;border:1px solid transparent;white-space:nowrap}
.tall{height:20px;line-height:19px}
.vert{writing-mode:vertical-rl;transform:rotate(180deg);width:18px;padding:0;line-height:17px;text-align:left}
.bright{background:#1e88e0;border-color:#2378c8;color:#0a2540}
.dim{background:#4679c2;border-color:#5b80c4;color:#0a1c3c}
.org{background:#ee7a0c;border-color:#d96f10;color:#2a1a00}
.brn{background:#c46a44;border-color:#c35f50;color:#241008}
.gray{background:#a9a9a9;border-color:#9a9a9a;color:#222;display:flex;justify-content:flex-end}
.overlap{position:absolute;left:1361px;top:336px;width:40px;height:9px;background:#17499c}

.b-options{left:8px;top:7px;width:193px;height:106px}
.b-samp{left:240px;top:7px;width:104px;height:65px}
.b-freq{left:368px;top:12px;width:104px;height:65px}
.b-fstart{left:464px;top:12px;width:120px;height:65px}
.b-fstart .ps{align-self:flex-start;padding-left:2px}
.b-fstep{left:560px;top:12px;width:113px;height:65px}
.b-vec{left:216px;top:76px;width:104px;height:65px}
.b-time{left:320px;top:76px;width:200px;height:65px}
.b-rect{left:527px;top:79px;width:217px;height:65px}
.b-impnp{left:8px;top:127px;width:89px;height:49px}
.b-impdt{left:120px;top:143px;width:128px;height:49px}
.b-minint{left:799px;top:15px;width:138px;height:65px}
.b-note{left:1151px;top:11px;width:226px;height:50px}
.b-it2{left:1039px;top:91px;width:155px;height:65px}
.b-it{left:1192px;top:91px;width:152px;height:65px}
.b-it .ps{align-self:flex-start;padding-left:6px}
.b-prefix{left:1328px;top:91px;width:81px;height:65px}
.b-osmo{left:31px;top:220px;width:265px;height:248px}
.b-c2r{left:280px;top:400px;width:32px;height:137px}
.b-s1{left:439px;top:207px;width:146px;height:33px;padding-top:6px}
.b-s2{left:535px;top:271px;width:146px;height:33px;padding-top:6px}
.b-s3{left:535px;top:335px;width:146px;height:33px;padding-top:6px}
.b-s4{left:535px;top:399px;width:146px;height:33px;padding-top:6px}
.b-d1{left:391px;top:267px;width:106px;height:49px}
.b-d2{left:391px;top:331px;width:106px;height:49px}
.b-d3{left:391px;top:395px;width:113px;height:49px}
.b-hist{left:400px;top:492px;width:192px;height:160px}
.b-choose{left:15px;top:603px;width:193px;height:160px}
.b-choose2{left:688px;top:480px;width:184px;height:181px;justify-content:flex-end}
.b-choose2 .ps{margin-bottom:-1px}
.b-push{left:688px;top:660px;width:193px;height:100px;padding-top:4px}
.b-sel{left:932px;top:557px;width:136px;height:173px;padding-right:3px}
.b-fft{left:1146px;top:276px;width:215px;height:120px}
.b-mul{left:1400px;top:296px;width:160px;height:64px;padding-top:11px}
.b-c2{left:1588px;top:376px;width:49px;height:161px}
.b-integ{left:1280px;top:412px;width:200px;height:65px;padding-top:4px}
.b-grate{left:1416px;top:547px;width:160px;height:65px;padding-top:4px}
.b-avg{left:1151px;top:484px;width:130px;height:104px}
.b-avg .ps{align-self:flex-start;padding-left:7px}
.b-entry{left:1368px;top:668px;width:192px;height:100px;padding-top:6px}

.p-hand{left:0;top:335px;width:31px;padding:0 1px 0 0}
.p-cin{left:287px;top:383px;height:18px}
.p-cre{left:287px;top:537px;height:18px}
.p-oout{left:296px;top:335px;width:25px}
.p-s1i{left:423px;top:215px;width:17px}
.p-s1o{left:585px;top:215px;width:25px}
.p-d1i{left:375px;top:282px;width:17px}
.p-d1o{left:496px;top:282px;width:25px}
.p-s2i{left:519px;top:278px;width:17px}
.p-s2o{left:680px;top:278px;width:25px}
.p-d2i{left:375px;top:346px;width:17px}
.p-d2o{left:496px;top:346px;width:25px}
.p-s3i{left:519px;top:342px;width:17px}
.p-s3o{left:680px;top:342px;width:25px}
.p-d3i{left:375px;top:410px;width:17px}
.p-d3o{left:504px;top:410px;width:25px}
.p-s4i{left:519px;top:406px;width:17px}
.p-s4o{left:680px;top:406px;width:25px}
.p-hi{left:384px;top:562px;width:17px}
.p-m0{left:1376px;top:303px;width:25px}
.p-m1{left:1376px;top:336px;width:25px}
.p-fo{left:1361px;top:327px;width:25px}
.p-mo{left:1560px;top:319px;width:25px}
.p-c2i{left:1603px;top:360px;height:17px}
.p-c2e{left:1603px;top:536px;height:18px}
.p-io{left:1255px;top:435px;width:26px}
.p-ii{left:1479px;top:435px;width:17px}
.p-gi{left:1575px;top:571px;width:17px}
.p-go{left:1391px;top:571px;width:26px}
.p-ai{left:1280px;top:527px;width:17px}

/* bottom panes */
.bottom{height:163px;flex:none;display:flex;background:#fcfcfc;border-top:1px solid #d6d6d6}
.console{width:439px;flex:none;margin:0;padding:1px 0 0 0;font-family:"Noto Sans",sans-serif;font-size:14px;line-height:20.700px;color:#3c3c3c;tab-size:31px;white-space:pre-wrap;overflow:hidden;border-right:1px solid #e0e0e0}
.vars{flex:1;position:relative;font-size:14px;color:#444;overflow:hidden}
.vhead{height:25px;display:flex;border-bottom:1px solid #efefef;font-weight:700;color:#b4b4b4;line-height:26px}
.vh1{width:119px;padding-left:6px;border-right:1px solid #f0f0f0}
.vh2{padding-left:6px}
.vrow{height:27px;display:flex;align-items:center;padding-left:6px;gap:6px}
.vrow.sub{padding-left:40px;gap:0}
.vk{width:84px}
.vblue{color:#1c5fa8}
.vbtns{position:absolute;right:2px;top:30px;width:18px;display:flex;flex-direction:column;align-items:center;gap:11px}
.tri-d{display:inline-block;width:0;height:0;border-left:5px solid transparent;border-right:5px solid transparent;border-top:6px solid #b8b8b8;flex:none}
.tri-r{display:inline-block;width:0;height:0;border-top:6px solid transparent;border-bottom:6px solid transparent;border-left:6px solid #b8b8b8;flex:none}

/* palette tree */
.sidebar{flex:1;min-width:0;background:#fcfcfc;border-left:1px solid #d5d0cc;padding-top:1px;font-size:14px;color:#3e4a58;overflow:hidden}
.ti{height:27px;display:flex;align-items:center;padding-left:5px;gap:10px}
.ti .tri-d{margin-left:-1px;margin-right:-3px}
.ti.c{padding-left:22px}

/* taskbar */
.taskbar{height:60px;flex:none;background:#e3e3e3;border-top:1px solid #bcbcbc;display:flex;justify-content:space-between}
.tbicons{display:flex;padding-left:15px}
.tb{width:55px;height:59px;position:relative;display:flex;align-items:center;justify-content:center}
.tb.first{margin:0 2.500px 0 -2.500px}
.tb.dot::after{content:"";position:absolute;left:24px;bottom:5px;width:7px;height:4px;border-radius:2px;background:#7d7d7d}
.tb.active::before{content:"";position:absolute;left:3.500px;top:5px;width:48px;height:48px;border-radius:4px;background:#f3f3f3}
.tb.active::after{content:"";position:absolute;left:18px;bottom:6px;width:19px;height:4px;border-radius:2px;background:#0a6fd0}
.tb svg{position:relative}
.svgpro{font:italic 700 7px "Liberation Serif",serif;fill:#ddd}
.svgeu{font:700 9px "Liberation Sans",sans-serif;fill:#666;text-anchor:middle}
.svgfz{font:italic 700 22px "Liberation Sans",sans-serif;fill:#fff;text-anchor:middle}
.svgs{font:700 22px "Liberation Sans",sans-serif;fill:#5a86c8;text-anchor:middle}
.tray{display:flex;align-items:center;gap:11px;padding-right:24px;margin-top:-1px}
.tray .wifi{margin-left:13px}
.tray .batt{margin-left:-2px}
.clock{display:flex;flex-direction:column;align-items:flex-end;margin-left:10px;font-size:14.500px;line-height:20px;color:#222}

/* properties dialog */
.dialog{position:absolute;left:712px;top:309px;width:549px;height:448px;background:#f6f5f4;border:1px solid #c9c7c4;border-radius:6px 6px 0 0;box-shadow:0 3px 12px rgba(0,0,0,.3);display:flex;flex-direction:column;z-index:5}
.dtitle{height:36px;flex:none;display:flex;align-items:center;justify-content:center;position:relative;border-bottom:1px solid #dbd8d5;font-size:14px;color:#87857f;padding-right:2px}
.dx{position:absolute;right:13px;top:12px}
.dtabs{height:38px;flex:none;margin:1px 2px 0;background:#e8e7e5;display:flex;gap:0;padding-left:7px;border-bottom:1px solid #d6d3d0;font-size:14px;color:#c2c0bd}
.tab{height:37px;line-height:38px;padding:0 13px;margin-right:6px}
.tab.sel{color:#8d8d8a;border-bottom:3px solid #3584e4;margin-right:5px}
.dbody{position:relative;flex:1;height:337px;margin:0 0 0 2px;margin-right:2px;background:#fcfcfc;overflow:hidden;padding-top:1px;font-size:14px}
.row{height:36.200px;display:flex;align-items:center;position:relative}
.row label{width:150px;flex:none;text-align:center;color:#8e9ba4;font-size:14.500px;letter-spacing:1px;white-space:nowrap;margin-top:-1px;padding-right:2px}
.row:first-child label{margin-top:-4px}
.row label.ul{text-decoration:underline;text-underline-offset:3px;text-decoration-thickness:1px}
.row label.wide{width:155px}
.ty{position:absolute;left:474px;width:66px;text-align:center;color:#a5a5a5;font-size:14.500px;letter-spacing:1px}
.ctl{height:34px;border:1px solid #dcdad7;border-radius:4px;display:flex;align-items:center;color:#333;font-size:14.300px}
.en{background:#fcfcfc;padding-left:8px}
.dd{background:#f6f5f4;padding-left:11px;color:#9c9c9c;gap:6px}
.cb{width:202px;background:#fcfcfc}
.cb span{flex:1;padding-left:8px}
.cb em{width:35px;height:100%;background:#f6f5f4;border-left:1px solid #dcdad7;border-radius:0 4px 4px 0;display:flex;align-items:center;justify-content:center}
.tri-s{display:inline-block;width:0;height:0;border-left:5.500px solid transparent;border-right:5.500px solid transparent;border-top:6px solid #8b8b8b}
.w-ot{width:151px}
.w-sy{width:128px}
.w-en1{width:318px}
.w-en2{width:324px}
.w-en3{width:319px}
.w-en4{width:221px;margin-left:253px}
mark{background:#3584e4;color:#fff}
.dscroll{position:absolute;right:1px;top:4px;width:2px;height:167px;background:#bdbcba}
.dact{height:36px;flex:none;display:flex;gap:5px;padding:0 2px 3px 279px;font-size:14.500px}
.dbtn{width:85px;height:33px;border:1px solid #dcdad7;border-radius:4px;display:flex;align-items:center;justify-content:center;color:#98a0a6}
.dbtn.dis{color:#cfcfcf}
```
